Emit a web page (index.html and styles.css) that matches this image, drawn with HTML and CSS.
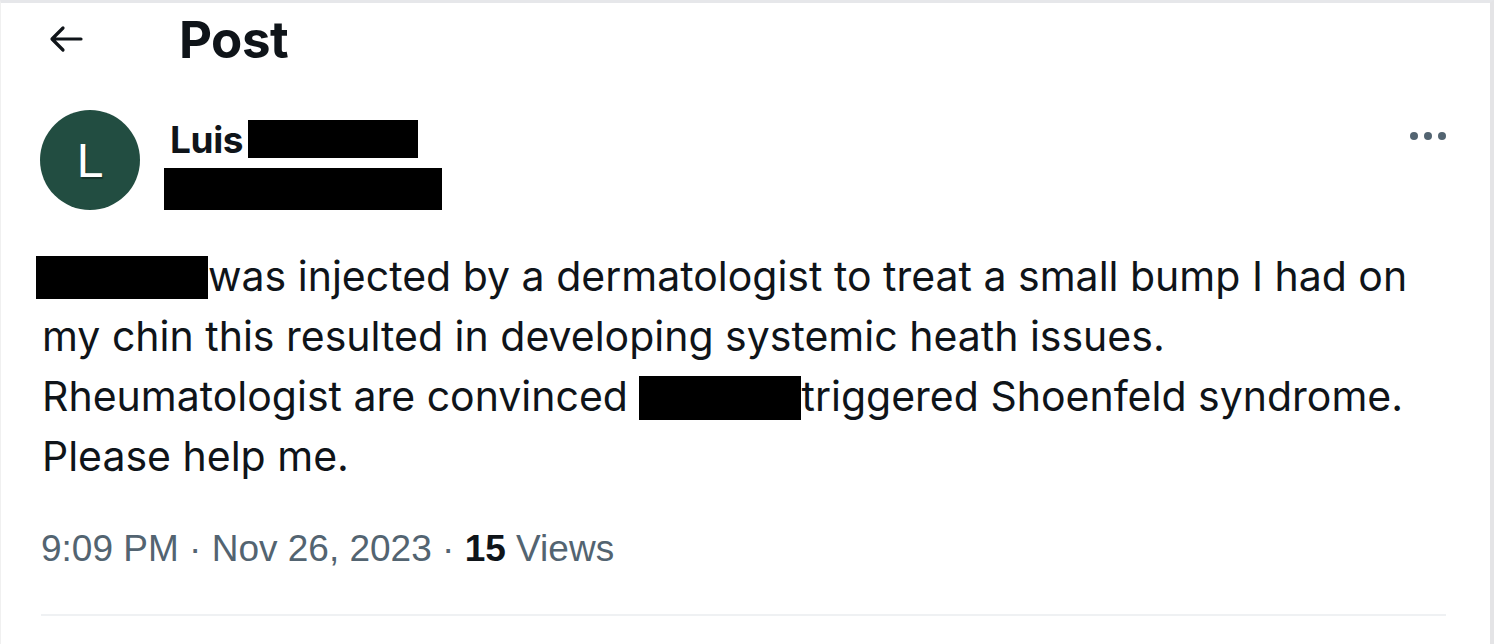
FILE: index.html
```html
<!DOCTYPE html>
<html lang="en">
<head>
<meta charset="utf-8">
<title>Post</title>
<link rel="stylesheet" href="styles.css">
</head>
<body>
<div class="page">
  <header class="topbar">
    <span class="back">
      <svg width="36" height="28" viewBox="0 0 36 28"><path d="M33 14H5M15 3L4 14l11 11" fill="none" stroke="#0f1419" stroke-width="3.2" stroke-linecap="round" stroke-linejoin="round"/></svg>
    </span>
    <h1 class="title">Post</h1>
  </header>
  <article class="tweet">
    <div class="author">
      <div class="avatar">L</div>
      <div class="names">
        <div class="name-row"><span class="name">Luis</span><span class="redact r-name"></span></div>
        <span class="redact r-handle"></span>
      </div>
      <div class="more"><i></i><i></i><i></i></div>
    </div>
    <p class="text"><span class="redact r-word1"></span>was injected by a dermatologist to treat a small bump I had on<br>my chin this resulted in developing systemic heath issues.<br>Rheumatologist are convinced <span class="redact r-word2"></span>triggered Shoenfeld syndrome.<br>Please help me.</p>
    <div class="meta">9:09 PM · Nov 26, 2023 · <b>15</b> Views</div>
    <div class="divider"></div>
  </article>
</div>
</body>
</html>
```
FILE: styles.css
```css
html, body { margin: 0; padding: 0; background: #fff; }
body { font-family: Inter, "Noto Sans", sans-serif; color: #0f1419; }
.page {
  width: 1494px;
  height: 644px;
  box-sizing: border-box;
  border-top: 3px solid #e6e7ea;
  border-left: 1px solid #f0f0f0;
  border-right: 4px solid #e4e4e6;
  overflow: hidden;
}
.topbar {
  display: flex;
  align-items: center;
  height: 72px;
  padding-left: 47px;
}
.back { display: flex; width: 36px; }
.title {
  margin: 0 0 0 95px;
  font-size: 51px;
  font-weight: 700;
  letter-spacing: -0.5px;
  line-height: 1;
}
.tweet { padding: 35px 0 0 39px; }
.author { display: flex; align-items: flex-start; }
.avatar {
  width: 100px; height: 100px; border-radius: 50%;
  background: #224d41; color: #fff;
  display: flex; align-items: center; justify-content: center;
  font-family: "Liberation Sans", sans-serif;
  font-size: 48px; font-weight: 400;
  text-shadow: 1px 2px 1px rgba(0,0,0,0.35);
  flex: none;
}
.names { display: flex; flex-direction: column; margin-left: 24px; padding-top: 10px; }
.name-row { display: flex; align-items: center; padding-left: 6px; height: 38px; }
.name { font-size: 37px; font-weight: 700; letter-spacing: -0.4px; }
.redact { display: inline-block; background: #000; }
.r-name { width: 170px; height: 38px; margin-left: 5px; }
.r-handle { width: 278px; height: 42px; margin-top: 10px; }
.more { margin-left: auto; margin-right: 44px; margin-top: 22px; display: flex; gap: 6px; }
.more i { width: 8px; height: 8px; border-radius: 50%; background: #536471; display: block; }
.text {
  margin: 36px 0 0 2px;
  font-size: 41px;
  line-height: 60px;
  letter-spacing: 0;
}
.r-word1 { width: 172px; height: 43px; margin-left: -6px; vertical-align: -8px; }
.r-word2 { width: 162px; height: 44px; vertical-align: -9px; }
.meta {
  margin-top: 41px;
  padding-left: 1px;
  font-family: "Liberation Sans", Arial, sans-serif;
  font-size: 37px;
  line-height: 44px;
  color: #536471;
}
.meta b { color: #0f1419; font-weight: 700; }
.divider { height: 2px; background: #eff1f3; margin: 43px 44px 0 1px; }
```
